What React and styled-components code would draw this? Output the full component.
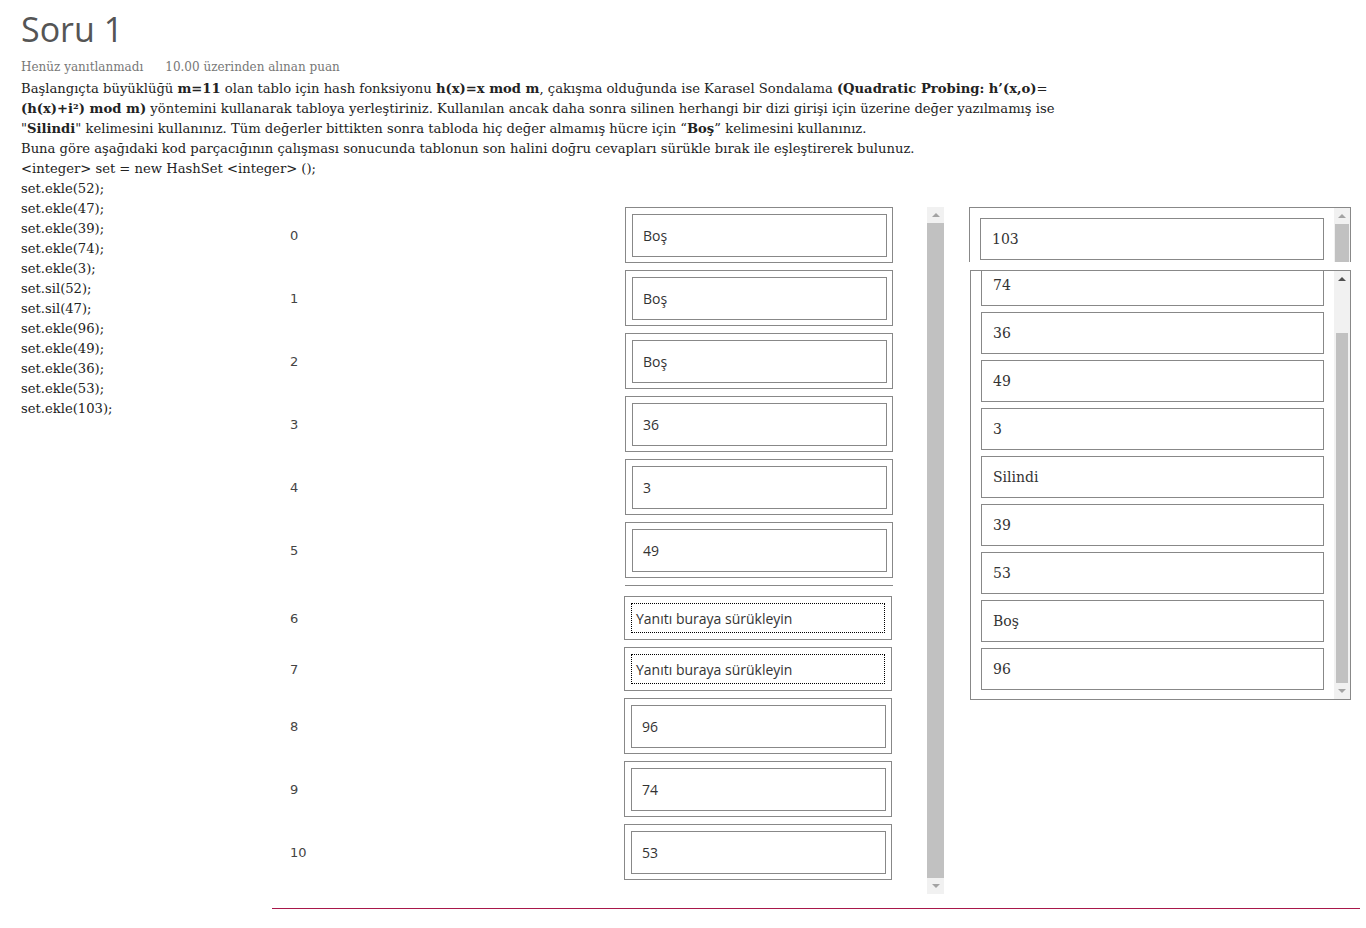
import React from 'react';
import styled, { createGlobalStyle } from 'styled-components';

const slots = [
  { index: 0, value: 'Boş' },
  { index: 1, value: 'Boş' },
  { index: 2, value: 'Boş' },
  { index: 3, value: '36' },
  { index: 4, value: '3' },
  { index: 5, value: '49' },
  { index: 6, value: null },
  { index: 7, value: null },
  { index: 8, value: '96' },
  { index: 9, value: '74' },
  { index: 10, value: '53' },
];

const choices = ['74', '36', '49', '3', 'Silindi', '39', '53', 'Boş', '96'];

const code = [
  'set.ekle(52);',
  'set.ekle(47);',
  'set.ekle(39);',
  'set.ekle(74);',
  'set.ekle(3);',
  'set.sil(52);',
  'set.sil(47);',
  'set.ekle(96);',
  'set.ekle(49);',
  'set.ekle(36);',
  'set.ekle(53);',
  'set.ekle(103);',
];

const GlobalStyle = createGlobalStyle`
  body {
    margin: 0;
    background: #fff;
    font-family: "DejaVu Serif", Georgia, serif;
    color: #222;
  }
`;

const Page = styled.div`
  padding: 0 0 0 21px;
  width: 1339px;
`;

const Title = styled.h1`
  margin: 0;
  padding-top: 8px;
  font-family: "Open Sans", "Noto Sans", sans-serif;
  font-weight: 400;
  font-size: 34px;
  line-height: 42px;
  color: #555;
`;

const Meta = styled.div`
  display: flex;
  gap: 22px;
  margin: 7px 0 2px;
  font-size: 12px;
  line-height: 20px;
  color: #777;
`;

const Text = styled.div`
  font-size: 13.15px;
  line-height: 20px;
  white-space: nowrap;
  color: #222;

  b {
    font-weight: 700;
  }
`;

const Main = styled.div`
  display: flex;
  align-items: flex-start;
`;

const Code = styled.div`
  width: 251px;
  flex-shrink: 0;
  font-size: 13.15px;
  line-height: 20px;
  color: #222;
`;

const Board = styled.div`
  flex: 1;
  display: flex;
  align-items: flex-start;
  margin-top: 28px;
  padding-bottom: 14px;
  border-bottom: 1px solid #a8174a;
`;

const Slots = styled.div`
  display: flex;
  flex-direction: column;
  flex-shrink: 0;
  width: 621px;
`;

const SlotRow = styled.div`
  display: flex;
  align-items: center;
  margin-bottom: 7px;
`;

const Divider = styled.div`
  margin: 0 0 10px 353px;
  width: 268px;
  height: 1px;
  background: #888;
`;

const Label = styled.div`
  width: 353px;
  flex-shrink: 0;
  box-sizing: border-box;
  padding-left: 18px;
  font-family: "DejaVu Sans", Verdana, sans-serif;
  font-size: 13px;
  color: #444;
`;

const Drop = styled.div`
  width: 268px;
  flex-shrink: 0;
  box-sizing: border-box;
  padding: ${({ $empty }) => ($empty ? '6px' : '6px 5px 5px 6px')};
  border: 1px solid #888;
  margin-left: ${({ $shift }) => ($shift ? '-1px' : '0')};
`;

const Answer = styled.div`
  height: 43px;
  box-sizing: border-box;
  padding-left: 10px;
  display: flex;
  align-items: center;
  border: 1px solid #888;
  font-family: "Open Sans", "Noto Sans", sans-serif;
  font-size: 14px;
  color: #333;
`;

const Placeholder = styled.div`
  height: 30px;
  box-sizing: border-box;
  padding-left: 4px;
  display: flex;
  align-items: center;
  border: 1px dotted #000;
  font-family: "Open Sans", "Noto Sans", sans-serif;
  font-size: 14px;
  color: #333;
`;

const Bar = styled.div`
  display: flex;
  flex-direction: column;
  flex-shrink: 0;
  width: ${({ $w }) => $w || 17}px;
  height: ${({ $h }) => $h}px;
  margin-left: ${({ $ml }) => $ml || 0}px;
  background: #f1f1f1;
`;

const Arrow = styled.div`
  height: ${({ $h }) => $h || 16}px;
  flex-shrink: 0;
  display: flex;
  align-items: center;
  justify-content: center;

  &::after {
    content: '';
    border-left: 4px solid transparent;
    border-right: 4px solid transparent;
    ${({ $down, $dark }) =>
      $down
        ? `border-top: 4px solid ${$dark ? '#505050' : '#a3a3a3'};`
        : `border-bottom: 4px solid ${$dark ? '#505050' : '#a3a3a3'};`}
  }
`;

const Gap = styled.div`
  height: ${({ $h }) => $h}px;
  flex-shrink: 0;
`;

const Thumb = styled.div`
  flex: ${({ $h }) => ($h ? `0 0 ${$h}px` : '1')};
  margin: 0 ${({ $inset }) => $inset || 0}px;
  background: #c1c1c1;
`;

const Pool = styled.div`
  display: flex;
  flex-direction: column;
  gap: 8px;
  margin-left: 25px;
  width: 382px;
`;

const PoolTop = styled.div`
  display: flex;
  height: 54px;
  overflow: hidden;
  border: 1px solid #888;
  border-bottom: none;
`;

const PoolMain = styled.div`
  display: flex;
  height: 428px;
  overflow: hidden;
  border: 1px solid #888;
  margin-left: 1px;
`;

const PoolList = styled.div`
  flex: 1;
  display: flex;
  flex-direction: column;
  gap: 6px;
  padding: 0 10px;
  margin-top: ${({ $offset }) => $offset || 0}px;
`;

const Choice = styled.div`
  height: 42px;
  flex-shrink: 0;
  box-sizing: border-box;
  padding-left: 11px;
  display: flex;
  align-items: center;
  border: 1px solid #888;
  font-size: 14px;
  color: #333;
`;

function Scrollbar({ height, thumbTop, thumbHeight, dark, inset, ml, w }) {
  return (
    <Bar $h={height} $ml={ml} $w={w}>
      <Arrow $dark={dark} />
      {thumbTop ? <Gap $h={thumbTop} /> : null}
      <Thumb $h={thumbHeight} $inset={inset} />
      <Arrow $down />
    </Bar>
  );
}

export default function App() {
  return (
    <>
      <GlobalStyle />
      <Page>
        <Title>Soru 1</Title>
        <Meta>
          <span>Henüz yanıtlanmadı</span>
          <span>10.00 üzerinden alınan puan</span>
        </Meta>
        <Text>
          Başlangıçta büyüklüğü <b>m=11</b> olan tablo için hash fonksiyonu <b>h(x)=x mod m</b>, çakışma olduğunda ise Karasel Sondalama <b>(Quadratic Probing: h’(x,o)</b>=
          <br />
          <b>(h(x)+i²) mod m)</b> yöntemini kullanarak tabloya yerleştiriniz. Kullanılan ancak daha sonra silinen herhangi bir dizi girişi için üzerine değer yazılmamış ise
          <br />
          "<b>Silindi</b>" kelimesini kullanınız. Tüm değerler bittikten sonra tabloda hiç değer almamış hücre için “<b>Boş</b>” kelimesini kullanınız.
          <br />
          Buna göre aşağıdaki kod parçacığının çalışması sonucunda tablonun son halini doğru cevapları sürükle bırak ile eşleştirerek bulunuz.
          <br />
          {'<integer> set = new HashSet <integer> ();'}
        </Text>
        <Main>
          <Code>
            {code.map((line) => (
              <div key={line}>{line}</div>
            ))}
          </Code>
          <Board>
            <Slots>
              {slots.map((slot) => (
                <React.Fragment key={slot.index}>
                  {slot.index === 6 && <Divider />}
                  <SlotRow>
                    <Label>{slot.index}</Label>
                    <Drop $empty={!slot.value} $shift={slot.index >= 6}>
                      {slot.value ? (
                        <Answer>{slot.value}</Answer>
                      ) : (
                        <Placeholder>Yanıtı buraya sürükleyin</Placeholder>
                      )}
                    </Drop>
                  </SlotRow>
                </React.Fragment>
              ))}
            </Slots>
            <Scrollbar height={687} inset={0} ml={34} />
            <Pool>
              <PoolTop>
                <PoolList $offset={10}>
                  <Choice>103</Choice>
                </PoolList>
                <Bar $h={60} $w={16}>
                  <Arrow />
                  <Thumb $inset={1} />
                </Bar>
              </PoolTop>
              <PoolMain>
                <PoolList $offset={-7}>
                  {choices.map((c) => (
                    <Choice key={c}>{c}</Choice>
                  ))}
                </PoolList>
                <Scrollbar height={428} thumbTop={46} dark inset={2} w={16} />
              </PoolMain>
            </Pool>
          </Board>
        </Main>
      </Page>
    </>
  );
}
